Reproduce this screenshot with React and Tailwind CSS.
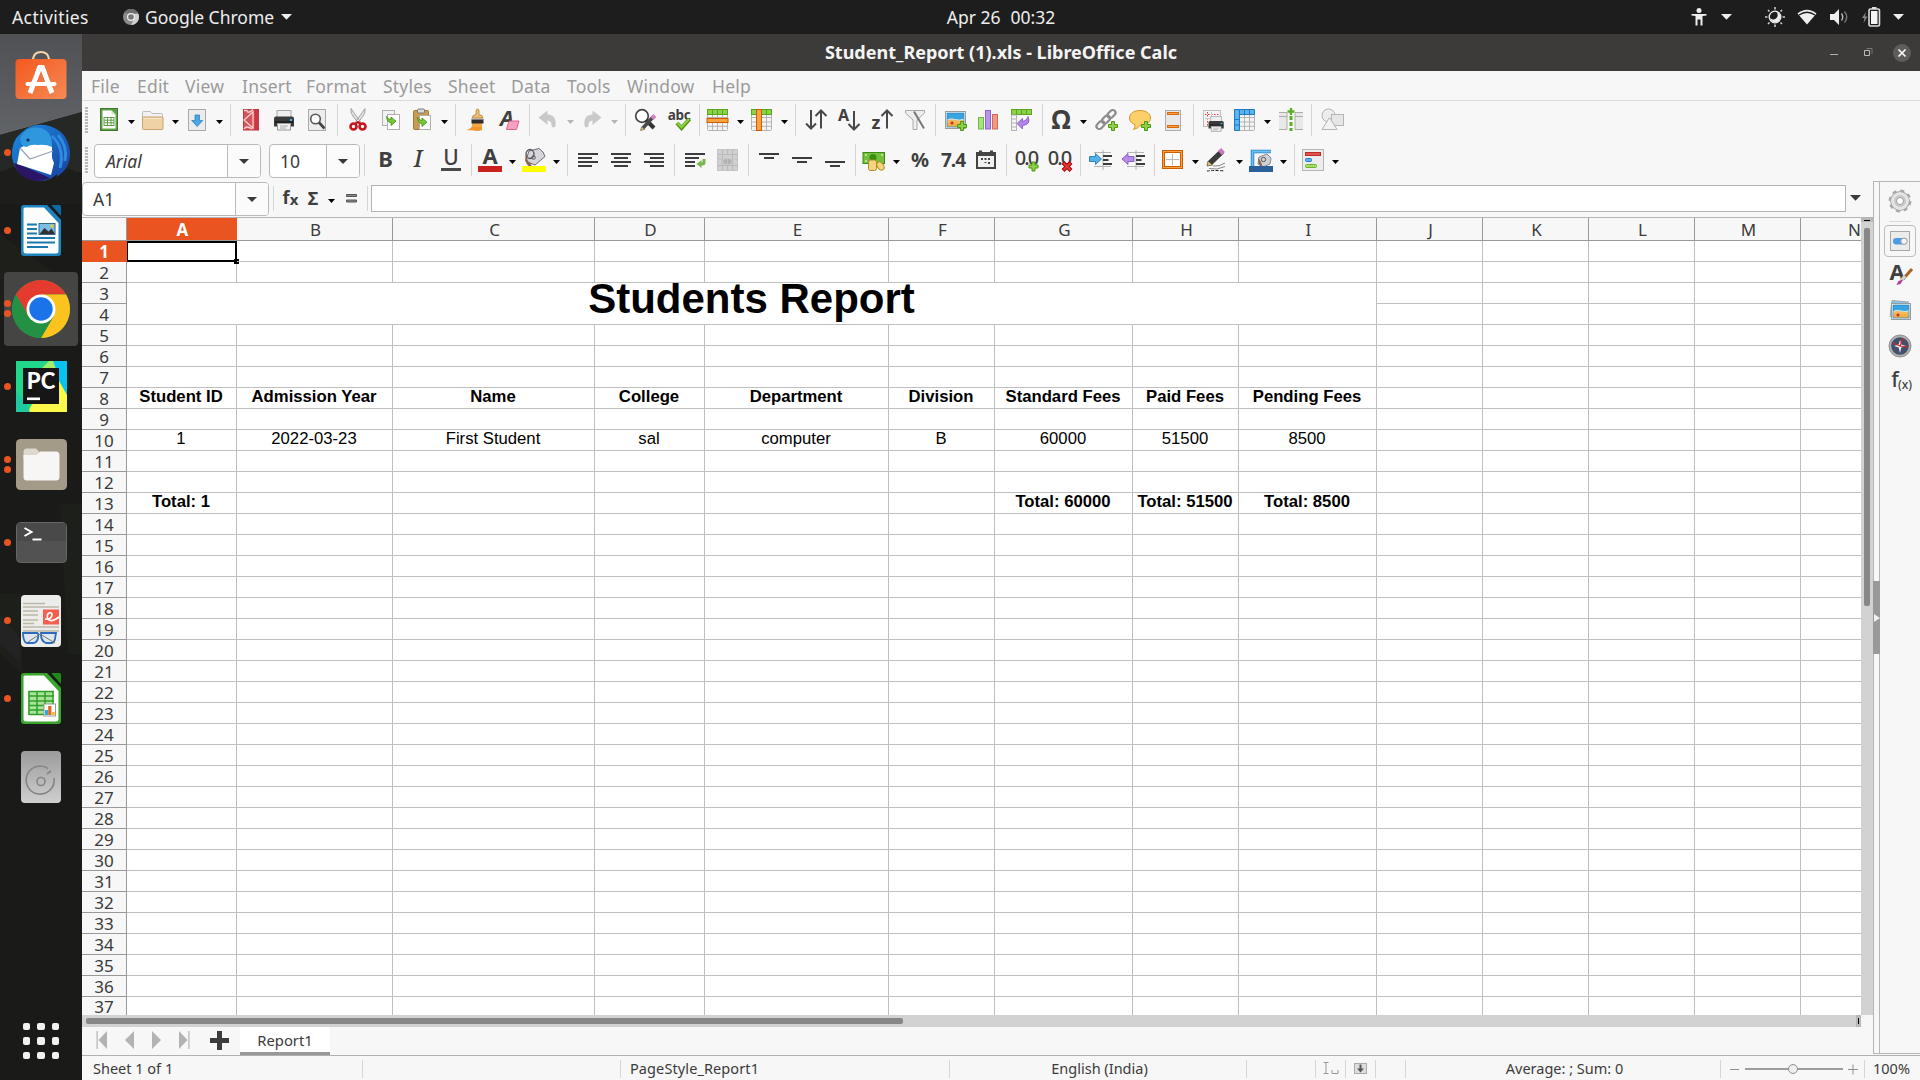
import React from "react";

const UI = "font-['Noto_Sans',sans-serif]";

/* ---------- small helpers ---------- */
const Ico = ({ children, s = 24 }) => (
  <svg width={s} height={s} viewBox="0 0 24 24" className="block shrink-0 overflow-visible">{children}</svg>
);
const Plus = ({ x, y }) => (
  <path transform={`translate(${x} ${y})`} d="M3.5 0.5h3v3h3v3h-3v3h-3v-3h-3v-3h3z" fill="#8ed04b" stroke="#4e9a06" />
);
const GreenArrow = ({ x, y }) => (
  <path transform={`translate(${x} ${y})`} d="M0.5 0.5 Q1 6.5 5 6.5 V9.5 L10 5.2 L5 1 V3.5 Q3 3.6 0.5 0.5z" fill="#73c93a" stroke="#3f8a0f" strokeWidth="0.8" />
);
const Lines = ({ rows }) => (
  <g fill="#3c3c3c">{rows.map(([x, y, w], i) => <rect key={i} x={x} y={y} width={w} height="2" />)}</g>
);
const GridBase = ({ children }) => (
  <>
    <rect x="1.5" y="1.5" width="20" height="21" rx="1" fill="#f4f4f4" stroke="#b4b4b4" />
    <path d="M1.5 9.5h20M1.5 14h20M1.5 18.3h20M6.5 2v20M11.5 2v20M16.5 2v20" stroke="#b4b4b4" />
    {children}
  </>
);
const Beach = ({ x, y, w, h }) => (
  <g transform={`translate(${x} ${y})`}>
    <rect width={w} height={h} fill="#fff" stroke="#9a9a9a" />
    <rect x="1.5" y="1.5" width={w - 3} height={h - 3} fill="#3aa4e0" />
    <path d={`M1.5 ${h * 0.5}q${w * 0.2}-2 ${w * 0.42}-.5t${w * 0.43}-.5V${h - 1.5}H1.5z`} fill="#f1b958" stroke="#c9ecf5" strokeWidth="1" />
    <rect x="1.5" y={h * 0.68} width={w - 3} height={h * 0.32 - 1.5} fill="#eeb04a" />
    <rect x="1.5" y="1.5" width={w - 3} height={h - 3} fill="none" stroke="#2c7fb5" strokeWidth=".7" />
    <path d="M5 11.500h3M6.500 10v3" stroke="#d22" strokeWidth="1.500" />
  </g>
);
const PrinterShape = () => (
  <g>
    <rect x="5" y="2.5" width="14" height="9" fill="#efefef" stroke="#a8a8a8" />
    <path d="M2 10.5q0-2 2-2h16q2 0 2 2v8h-20z" fill="#3a3a3a" />
    <rect x="3" y="13" width="18" height="2" fill="#222" />
    <rect x="18" y="11" width="2" height="2" fill="#2bc4f3" />
    <rect x="5.5" y="15.5" width="13" height="6.5" fill="#f2f2f2" stroke="#9a9a9a" />
    <path d="M8 18h8M8 20h6" stroke="#aaa" />
  </g>
);
const Glyph = ({ x = 12, y = 19, size = 20, children, weight = 700, family = "Noto Sans", italic, fill = "#3f3f3f", ls = 0 }) => (
  <text x={x} y={y} fontSize={size} fontWeight={weight} fontFamily={family} fontStyle={italic ? "italic" : "normal"} textAnchor="middle" fill={fill} letterSpacing={ls}>{children}</text>
);

/* ---------- standard toolbar icons ---------- */
const NewSheet = () => (
  <Ico><rect x="3.5" y="0.5" width="17" height="22" fill="#5f9e4a" stroke="#3e7a2b" />
    <path d="M5.5 2.5h9l4 4v14h-13z" fill="#fff" /><path d="M14.5 2.5v4h4" fill="#cfe5c4" />
    <rect x="7" y="9.5" width="10" height="8" fill="#fff" stroke="#5f9e4a" /><path d="M7 12.2h10M7 14.8h10M10.5 9.5v8M14 9.5v8" stroke="#5f9e4a" /></Ico>
);
const OpenIco = () => (
  <Ico><path d="M1.5 12V4.5q0-1 1-1h7l1.5 2h9.500q1 0 1 1V12" fill="#f2f2f2" stroke="#bdbdbd" />
    <rect x="1.500" y="9" width="20.500" height="12.500" rx="1" fill="#efd2a6" stroke="#c8a26c" /><path d="M2.500 10.500h18.500" stroke="#f9e8cc" /></Ico>
);
const SaveIco = () => (
  <Ico><rect x="3.5" y="1.5" width="17" height="21" fill="#ececec" stroke="#a9a9a9" />
    <path d="M10 7h4.500v5.500h3.200L12.200 18.500 6.700 12.500H10z" fill="#4aa7e2" stroke="#2b84c4" strokeWidth="0.8" /></Ico>
);
const PdfIco = () => (
  <Ico><rect x="4.500" y="1.500" width="15" height="20.500" fill="#d8545b" stroke="#b93a41" />
    <path d="M5 2.500h3q1 4 6-1M5 12l9-8v16zM5 21q2-4 8 0" stroke="#f7cfd0" strokeWidth="1.300" fill="none" /><rect x="15.500" y="2" width="3.500" height="20" fill="#c62b34" opacity=".7" /></Ico>
);
const PreviewIco = () => (
  <Ico><rect x="3.500" y="1.500" width="17" height="21" fill="#ececec" stroke="#a9a9a9" />
    <circle cx="10.500" cy="11" r="4.800" fill="#fff" stroke="#555" strokeWidth="1.600" /><path d="M14 14.500l5.500 6" stroke="#444" strokeWidth="2.600" /></Ico>
);
const CutIco = () => (
  <Ico><path d="M5 0.500q-1 5 3 9l5 6.500 1.500-2zM19 0.500q1 5-3 9l-5 6.500-1.500-2z" fill="#e3e3e3" stroke="#8f8f8f" strokeWidth="0.800" />
    <circle cx="7.500" cy="18.500" r="3" fill="none" stroke="#c8141c" strokeWidth="2.600" /><circle cx="16.500" cy="18.500" r="3" fill="none" stroke="#c8141c" strokeWidth="2.600" /><path d="M9 16l3-2 3 2" stroke="#c8141c" strokeWidth="2" fill="none" /></Ico>
);
const CopyIco = () => (
  <Ico><rect x="3.500" y="2.500" width="12" height="15" fill="#f1f1f1" stroke="#b0b0b0" /><rect x="8.500" y="6.500" width="12" height="15" fill="#fff" stroke="#b0b0b0" /><GreenArrow x={7} y={8} /></Ico>
);
const PasteIco = () => (
  <Ico><rect x="3.500" y="2.500" width="15" height="19" rx="1" fill="#c99a52" stroke="#a57833" /><rect x="7.500" y="1" width="7" height="4" rx="1" fill="#d8d8d8" stroke="#7a7a7a" />
    <rect x="9.500" y="7.500" width="11" height="14" fill="#fff" stroke="#b0b0b0" /><GreenArrow x={7} y={9} /></Ico>
);
const BrushIco = () => (
  <Ico><path d="M2 22q5-1 6-4h10v4q-4 1.500-8 0.500z" fill="#f0962c" /><rect x="8" y="15" width="10" height="4" fill="#f4a845" /><rect x="7.500" y="11" width="12" height="4.500" fill="#2e2e2e" /><rect x="7.500" y="10" width="12" height="1.500" fill="#d2d2d2" />
    <path d="M8 10q0-3 4-3.500V3q0-2 1.500-2t1.500 2v3.500q4 .5 4 3.500z" fill="#e9bd78" stroke="#b98437" strokeWidth="0.800" /></Ico>
);
const ClearIco = () => (
  <Ico><Glyph x={10} y={18} size={22} italic>A</Glyph><path d="M12.500 13h9.500l-2.500 8.500h-10q1-5 3-8.500z" fill="#f7a1c2" stroke="#e0628f" /></Ico>
);
const UndoIco = ({ flip }) => (
  <Ico><path transform={flip ? "translate(24 0) scale(-1 1)" : undefined} d="M2.500 9.500 L11.500 2.500 V6.500 Q21 7 19.500 18 Q17.500 21 15.500 18 Q16 13 11.500 12.500 V17z" fill="#c9c9c9" /></Ico>
);
const FindIco = () => (
  <Ico><circle cx="8" cy="8" r="6.300" fill="#fff" stroke="#454545" strokeWidth="1.700" /><path d="M12 12l8 8" stroke="#333" strokeWidth="4" /><path d="M9 20l10-11" stroke="#4a4a4a" strokeWidth="3.500" /><path d="M18 7.500l3 3" stroke="#d184c8" strokeWidth="4" /><path d="M6.500 22.500l1-3.500 3 2.500z" fill="#e9cb5a" stroke="#555" strokeWidth=".6" /></Ico>
);
const SpellIco = () => (
  <Ico><Glyph y={12} size={13.500} ls={-0.300}>abc</Glyph><path d="M10 15l4.500 5 8-9" fill="none" stroke="#4e9a06" strokeWidth="4" /><path d="M10.500 15l4 4.200 7.500-8.200" fill="none" stroke="#8ed04b" strokeWidth="2" /></Ico>
);
const RowIco = () => (
  <Ico><GridBase><rect x="1.500" y="1.500" width="20" height="5" fill="#8ad348" stroke="#57a61b" /><path d="M6.500 2v4M11.500 2v4M16.500 2v4" stroke="#57a61b" /><rect x="1" y="10.500" width="21" height="4" fill="#f9a23f" stroke="#ce5c00" /></GridBase></Ico>
);
const ColIco = () => (
  <Ico><GridBase><rect x="1.500" y="1.500" width="20" height="5" fill="#8ad348" stroke="#57a61b" /><path d="M6.500 2v4M11.500 2v4M16.500 2v4" stroke="#57a61b" /><rect x="6.500" y="1.500" width="5" height="21" fill="#f9a23f" stroke="#ce5c00" /></GridBase></Ico>
);
const down = (x, y = 2) => `M${x} ${y}V20.500M${x - 5} ${15.500}L${x} 20.500L${x + 5} 15.500`;
const up = (x) => `M${x} 20.500V3M${x - 5.500} 8L${x} 2.500L${x + 5.500} 8`;
const SortIco = () => <Ico><path d={down(7) + up(17)} fill="none" stroke="#484848" strokeWidth="2" /></Ico>;
const SortAIco = () => <Ico><Glyph x={6.500} y={13} size={16}>A</Glyph><path d="M17 3V21M11.500 16L17 21.500L22.500 16" fill="none" stroke="#484848" strokeWidth="2" /></Ico>;
const SortZIco = () => <Ico><Glyph x={6} y={21} size={18}>z</Glyph><path d={up(17)} fill="none" stroke="#484848" strokeWidth="2" /></Ico>;
const FilterIco = () => (
  <Ico><path d="M2.500 2.500h19v2.500l-7.500 7v9.500h-4V12l-7.500-7z" fill="#ededed" stroke="#a8a8a8" /><path d="M11 3.500l10 17" stroke="#777" strokeWidth="2" /></Ico>
);
const ImageIco = () => <Ico><Beach x={1.500} y={3.500} w={20} h={17} /><Plus x={13} y={13} /></Ico>;
const ChartIco = () => (
  <Ico><rect x="1.500" y="9.500" width="5" height="11.500" fill="#a9e37b" stroke="#73b83f" /><rect x="8.500" y="2.500" width="5" height="18.500" fill="#b894ea" stroke="#8e63cc" /><rect x="15.500" y="6.500" width="5" height="14.500" fill="#f09a86" stroke="#d36a54" /></Ico>
);
const PivotIco = () => (
  <Ico><rect x="1.500" y="1.500" width="20" height="5" fill="#8ad348" stroke="#57a61b" /><path d="M6.500 2v4M11.500 2v4M16.500 2v4" stroke="#57a61b" /><rect x="1.500" y="7" width="5" height="15.500" fill="#f4f4f4" stroke="#b4b4b4" /><path d="M2 11h5M2 15h5M2 19h5" stroke="#b4b4b4" />
    <path d="M18 8.500q3.500 8-5.500 9v3.500l-5.500-5.500 5.500-5v3q4.500-.5 5.500-5z" fill="#b286e6" stroke="#8351c4" strokeWidth=".8" /></Ico>
);
const OmegaIco = () => <Ico><Glyph x={12} y={21} size={26}>Ω</Glyph></Ico>;
const LinkIco = () => (
  <Ico><g fill="none" stroke="#8c8c8c" strokeWidth="2.200"><rect x="-4.500" y="-2.800" width="9" height="5.600" rx="2.800" transform="translate(16.500 6) rotate(-45)" /><rect x="-4.500" y="-2.800" width="9" height="5.600" rx="2.800" transform="translate(11 11.500) rotate(-45)" /><rect x="-4.500" y="-2.800" width="9" height="5.600" rx="2.800" transform="translate(5.500 17) rotate(-45)" /></g><Plus x={13} y={13} /></Ico>
);
const CommentIco = () => (
  <Ico><path d="M12 2.500c6 0 10.500 3 10.500 7.500S18 17.500 12 17.500q-2 3-6.500 4 2-2.500 1.500-4.800Q1.500 14.500 1.500 10C1.500 5.500 6 2.500 12 2.500z" fill="#fbd06b" stroke="#d59a1f" /><Plus x={13} y={13} /></Ico>
);
const HeaderIco = () => (
  <Ico><rect x="4.500" y="2.500" width="15" height="20" fill="#e8e8e8" stroke="#ababab" /><rect x="6.500" y="4.500" width="11" height="2" fill="#f9a23f" stroke="#d9670c" /><rect x="6.500" y="17.500" width="11" height="2" fill="#f9a23f" stroke="#d9670c" /></Ico>
);
const PrintAreaIco = () => (
  <Ico><rect x="1.500" y="2.500" width="17" height="16" fill="#f4f4f4" stroke="#bdbdbd" /><path d="M3 6.500h14M5.500 4v14" stroke="#e33" strokeDasharray="1.500 1.500" /><path d="M3 10.500h5M9.500 4v5" stroke="#ccc" /><g transform="translate(5 6.500) scale(.76)"><PrinterShape /></g></Ico>
);
const FreezeIco = () => (
  <Ico><GridBase><path d="M1.500 1.500h20v5h-15v16h-5z" fill="#5bb4ee" stroke="#1f7bc0" /><path d="M6.500 2v5M11.500 2v5M16.500 2v5M2 11.500h5M2 17h5" stroke="#1f7bc0" /></GridBase></Ico>
);
const SplitIco = () => (
  <Ico><g fill="#e8e8e8"><rect x="0" y="4" width="8" height="18" /><rect x="16" y="4" width="8" height="18" /></g><path d="M0 4.500h8v17H0M24 4.500h-8v17h8M0 8.500h8M16 8.500h8" fill="none" stroke="#adadad" /><path d="M12 8v15" stroke="#5bb024" strokeWidth="3" strokeDasharray="4 2" /><path d="M12 0v7M8.500 3.500h7" stroke="#5bb024" strokeWidth="2.400" /></Ico>
);
const ShapesIco = () => (
  <Ico><circle cx="8.500" cy="7.500" r="6.500" fill="#ededed" stroke="#b5b5b5" /><rect x="11.500" y="6.500" width="12" height="11" fill="#e6e6e6" stroke="#b5b5b5" /><path d="M9.500 9.500l7.500 12h-15z" fill="#f3f3f3" stroke="#b5b5b5" /></Ico>
);

/* ---------- formatting toolbar icons ---------- */
const BoldIco = () => <Ico><Glyph x={12.500} y={19} size={22}>B</Glyph></Ico>;
const ItalicIco = () => <Ico><Glyph x={12} y={19} size={23} italic weight={500} family="Noto Serif, Liberation Serif">I</Glyph></Ico>;
const UnderIco = () => <Ico><Glyph x={12} y={17} size={21} weight={500}>U</Glyph><rect x="2" y="20" width="20" height="3" fill="#4a4a4a" /></Ico>;
const FontColorIco = () => <Ico><Glyph x={12} y={16} size={22}>A</Glyph><rect x="0" y="18" width="24" height="6" fill="#c9211e" /></Ico>;
const FillIco = () => (
  <Ico><path d="M7 3l10-2.500q5 3 6 8L13 17 3.500 13z" fill="#d5d5da" stroke="#6d6d75" /><ellipse cx="8" cy="6" rx="4" ry="4.500" fill="none" stroke="#555" strokeWidth="1.300" /><circle cx="11.500" cy="9.500" r="1.800" fill="none" stroke="#555" /><path d="M3.500 7q-1 8 3 11h3q0-3-3-4z" fill="#8a6a52" /><rect x="0" y="18" width="24" height="6" fill="#ffff00" /></Ico>
);
const AL = () => <Ico><Lines rows={[[2, 5, 20], [2, 9, 14], [2, 13, 20], [2, 17, 14]]} /></Ico>;
const AC = () => <Ico><Lines rows={[[2, 5, 20], [5, 9, 14], [2, 13, 20], [5, 17, 14]]} /></Ico>;
const AR = () => <Ico><Lines rows={[[2, 5, 20], [8, 9, 14], [2, 13, 20], [8, 17, 14]]} /></Ico>;
const WrapIco = () => <Ico><Lines rows={[[2, 5, 20], [2, 9, 14], [2, 13, 10], [2, 17, 10]]} /><path d="M19.500 11h3v4q0 2.500-4 2.500v2.500l-5-4 5-4v2.500q1 0 1-1z" fill="#78b84f" /></Ico>;
const MergeIco = () => (
  <Ico><rect x="1.500" y="1.500" width="20" height="21" fill="#d0d0d0" stroke="#c4c4c4" /><path d="M2 6.500h20M2 11h3M19 11h3M2 17.500h20M6.500 2v20M11.500 2v5M16.500 2v20M11.500 18v4" stroke="#bababa" /><path d="M5.500 10.500h12v6h-12z" fill="#c2c2c2" /><path d="M7 13.500l4-3v6zM16 13.500l-4-3v6z" fill="#b0b0b0" /></Ico>
);
const VT = () => <Ico><Lines rows={[[2, 5, 20], [7, 9, 10]]} /></Ico>;
const VM = () => <Ico><Lines rows={[[2, 9, 20], [7, 13, 10]]} /></Ico>;
const VB = () => <Ico><Lines rows={[[2, 13, 20], [7, 17, 10]]} /></Ico>;
const MoneyIco = () => (
  <Ico><rect x="1" y="4.500" width="21.500" height="11" fill="#74bf3c" stroke="#3d8c12" /><circle cx="11" cy="9.500" r="3.500" fill="#3d8c12" /><path d="M3 7h2M19 7h2M3 13h2" stroke="#d2f0b5" strokeWidth="1.500" /><rect x="6.500" y="12" width="8" height="10.500" rx="2" fill="#f0d583" stroke="#b68a1e" /><ellipse cx="18.500" cy="18" rx="3" ry="4.500" transform="rotate(-35 18.500 18)" fill="#f0d583" stroke="#b68a1e" /></Ico>
);
const PctIco = () => <Ico><Glyph x={12} y={19} size={20}>%</Glyph></Ico>;
const NumIco = () => <Ico><Glyph x={12} y={18.500} size={19} ls={-1}>7.4</Glyph></Ico>;
const DateIco = () => (
  <Ico><path d="M2 4h3V2.500h3V4h8V2.500h3V4h3v17H2z" fill="#444" /><rect x="4" y="8" width="16" height="11" fill="#f0f0f0" /><g fill="#444"><rect x="7" y="10" width="2" height="2" /><rect x="10.500" y="10" width="2" height="2" /><rect x="14" y="10" width="2" height="2" /><rect x="14" y="14" width="2" height="2" /><rect x="10.500" y="14" width="2" height="1" /></g></Ico>
);
const DecText = () => <Glyph x={11} y={17} size={20} weight={500} ls={-2}>0.0</Glyph>;
const AddDec = () => <Ico><DecText /><Plus x={13.500} y={13.500} /></Ico>;
const DelDec = () => <Ico><DecText /><path d="M15 14.500l8 8M23 14.500l-8 8" stroke="#a40000" strokeWidth="4" /><path d="M15.500 15l7 7M22.500 15l-7 7" stroke="#e23838" strokeWidth="2.200" /></Ico>;
const IndentLines = () => (
  <g><path d="M5 4.500h17M14 2v20M5 18.500h17" stroke="#b4b4b4" /><path d="M14 8h9M14 12h5.500M14 16h9" stroke="#3c3c3c" strokeWidth="2" /></g>
);
const IncInd = () => <Ico><IndentLines /><path d="M.5 8.500h6v-3l6 5.500-6 5.500v-3h-6z" fill="#53b2ea" stroke="#1b6fa8" strokeWidth=".8" /></Ico>;
const DecInd = () => <Ico><IndentLines /><path d="M12 8.500h-6v-3l-6 5.500 6 5.500v-3h6z" fill="#b78be8" stroke="#7c4bc0" strokeWidth=".8" /></Ico>;
const BorderIco = () => (
  <Ico><rect x="2.500" y="3.500" width="18" height="16" fill="#fff" stroke="#ce5c00" strokeWidth="3" /><rect x="2.500" y="3.500" width="18" height="16" fill="none" stroke="#f9a23f" /><path d="M11.500 6v11M5 11.500h13" stroke="#b8b8b8" /></Ico>
);
const LineStyleIco = () => (
  <Ico><path d="M5 15L17 3.500" stroke="#3b3b3b" strokeWidth="5.500" /><path d="M15 5l3-3" stroke="#cc7ac0" strokeWidth="5.500" /><path d="M2 18l1-5 4.500 4z" fill="#e4c36a" stroke="#333" strokeWidth=".6" /><path d="M8 18q6 1 12-3M4 20.500q8 2 16-2" stroke="#888" fill="none" /><path d="M2 23q8-1 18 0" stroke="#222" strokeDasharray="3 1.500" fill="none" /></Ico>
);
const BorderColorIco = () => (
  <Ico><path d="M3.500 18V3.500H22" stroke="#1f84c6" strokeWidth="3.500" fill="none" /><path d="M3.500 18V3.500H22" stroke="#6cc1f3" strokeWidth="1.800" fill="none" /><path d="M10 9l8-3 4 4-1 6-7 3-5-3z" fill="#d0d0d6" stroke="#6d6d75" strokeWidth=".8" /><circle cx="14.500" cy="11.500" r="2.200" fill="none" stroke="#555" /><path d="M9.500 10q-1 5 2 8h2q-1-4-4-8z" fill="#8a6a52" /><rect x="0" y="18" width="24" height="6" fill="#2a6099" /></Ico>
);
const CondIco = () => (
  <Ico><rect x="1.500" y="1.500" width="21" height="21" fill="#ececec" stroke="#b5b5b5" /><rect x="4.500" y="4.500" width="15" height="3" fill="#e05252" stroke="#c02c2c" /><rect x="4.500" y="10.500" width="6" height="3" rx="1" fill="#5bb4ee" stroke="#1f7bc0" /><rect x="4.500" y="16.500" width="11" height="3" rx="1" fill="#a3e069" stroke="#6cb02e" /></Ico>
);

/* ---------- toolbar layout ---------- */
const Caret = ({ c = "#000" }) => <svg width="7" height="4" viewBox="0 0 7 4" className="block"><path d="M0 0h7L3.500 4z" fill={c} /></svg>;
const Item = ({ I, flip }) => <div className="flex h-8 w-[33px] items-center justify-center"><I flip={flip} /></div>;
const Drop = ({ I, dim, flip }) => (
  <div className="flex h-8 w-11 items-center pl-[2.500px]"><I flip={flip} /><div className="ml-[7px] mt-1"><Caret c={dim ? "#b5b5b5" : "#000"} /></div></div>
);
const Sep = () => <div className="flex h-8 w-2 justify-center"><div className="h-8 w-px bg-[#d4d4d4]" /></div>;
const Grip = () => (
  <div className="flex w-[3px] flex-col gap-px">{Array.from({ length: 9 }, (_, i) => <div key={i} className="h-0.5 bg-[#b8b8b8]" />)}</div>
);
const Printer = () => <Ico><PrinterShape /></Ico>;
const tools = (list) => list.map((t, i) => {
  if (t === "|") return <Sep key={i} />;
  const [I, kind, dim, flip] = Array.isArray(t) ? t : [t];
  return kind ? <Drop key={i} I={I} dim={dim} flip={flip} /> : <Item key={i} I={I} />;
});
const STANDARD = [[NewSheet, 1], [OpenIco, 1], [SaveIco, 1], "|", PdfIco, Printer, PreviewIco, "|", CutIco, CopyIco, [PasteIco, 1], "|", BrushIco, ClearIco, "|", [UndoIco, 1, 1], [UndoIco, 1, 1, true], "|", FindIco, SpellIco, "|", [RowIco, 1], [ColIco, 1], "|", SortIco, SortAIco, SortZIco, FilterIco, "|", ImageIco, ChartIco, PivotIco, "|", [OmegaIco, 1], LinkIco, CommentIco, HeaderIco, "|", PrintAreaIco, [FreezeIco, 1], SplitIco, "|", ShapesIco];
const FORMAT = ["|", BoldIco, ItalicIco, UnderIco, "|", [FontColorIco, 1], [FillIco, 1], "|", AL, AC, AR, "|", WrapIco, MergeIco, "|", VT, VM, VB, "|", [MoneyIco, 1], PctIco, NumIco, DateIco, "|", AddDec, DelDec, "|", IncInd, DecInd, "|", [BorderIco, 1], [LineStyleIco, 1], [BorderColorIco, 1], "|", [CondIco, 1]];

const BigCaret = ({ c = "#3a3a3a" }) => <svg width="11" height="6" viewBox="0 0 11 6" className="block"><path d="M0 0h11L5.500 5.800z" fill={c} /></svg>;
const SmallCaret = () => <svg width="10" height="5" viewBox="0 0 10 5" className="block"><path d="M0 0h10L5 5z" fill="#3a3a3a" /></svg>;
const Combo = ({ text, cls, btn, italic }) => (
  <div className={`flex h-[34px] overflow-hidden rounded-[4px] border border-[#b9b9b9] bg-white text-[17.500px] text-[#3a3a3a] ${cls}`}>
    <div className={`flex flex-1 items-center pt-px ${italic ? "pl-[11px] italic" : "pl-[10px]"}`}>{text}</div>
    <div className={`flex items-center justify-center border-l border-[#b9b9b9] bg-[#fbfbfb] ${btn}`}><SmallCaret /></div>
  </div>
);

/* ---------- top bar ---------- */
const TopBar = () => (
  <div className="grid h-[34px] grid-cols-[1fr_110px_864px] items-center bg-[#1d1d1d] text-[17.500px] text-[#eeeeee]">
    <div className="flex items-center">
      <span className="w-[111px] whitespace-nowrap pl-3 tracking-[0.400px]">Activities</span>
      <svg width="16" height="16" viewBox="0 0 16 16" className="ml-3"><circle cx="8" cy="8" r="8" fill="#8b8b8b" /><path d="M8 4.500h7.200A8 8 0 0 1 8 16l3-6z" fill="#d0d0d0" /><path d="M1 4A8 8 0 0 1 15 4.500H8z" fill="#6e6e6e" /><circle cx="8" cy="8" r="4" fill="#efefef" /><circle cx="8" cy="8" r="2.800" fill="#777" /></svg>
      <span className="ml-[6px]">Google Chrome</span>
      <div className="ml-[7px]"><BigCaret c="#eee" /></div>
    </div>
    <div className="flex justify-center gap-2.5 whitespace-nowrap"><span>Apr 26</span><span>00:32</span></div>
    <div className="flex items-center justify-end pr-4">
      <svg width="16" height="20" viewBox="0 0 16 20" fill="#eee"><circle cx="8" cy="3.500" r="2.500" /><path d="M.5 7h15v1.500l-4 .5v9.500h-2v-6h-3v6h-2V9l-4-.5z" /></svg>
      <div className="ml-[14px]"><BigCaret c="#eee" /></div>
      <svg width="20" height="20" viewBox="0 0 20 20" className="ml-[33px]"><circle cx="10" cy="10" r="5.800" fill="none" stroke="#eee" strokeWidth="1.300" /><path d="M9 5a5.200 5.200 0 1 0 6 6.500A4.200 4.200 0 0 1 9 5z" transform="rotate(-90 10 10)" fill="#eee" /><g stroke="#ccc" strokeWidth="1.600"><path d="M10 0v2.500M10 17.500V20M0 10h2.500M17.500 10H20M3 3l1.500 1.500M15.500 15.500L17 17M3 17l1.500-1.500M15.500 4.500L17 3" /></g></svg>
      <svg width="20" height="16" viewBox="0 0 20 16" className="ml-[12px]"><path d="M.5 4.500Q10-3 19.500 4.500L10 15.500z" fill="#eee" /><path d="M2 5Q10-.5 18 5" fill="none" stroke="#1d1d1d" strokeWidth="1.300" transform="translate(0 1)" /></svg>
      <svg width="19" height="18" viewBox="0 0 19 18" className="ml-[13px]"><path d="M0 6h4l5-5v16l-5-5H0z" fill="#eee" /><path d="M11.500 5.500q2.500 3.500 0 7" stroke="#bbb" strokeWidth="1.400" fill="none" /><path d="M14.500 3.500q4.500 5.500 0 11" stroke="#777" strokeWidth="1.400" fill="none" /></svg>
      <svg width="19" height="20" viewBox="0 0 19 20" className="ml-[13px]"><path d="M4 5L0 11h2.500L1.500 16l4-6.500H3z" fill="#8a8a8a" /><rect x="7" y="2" width="10.500" height="17" rx="1.500" fill="none" stroke="#ddd" strokeWidth="1.600" /><rect x="10" y="0" width="4.500" height="2" fill="#ddd" /><rect x="9" y="4" width="6.500" height="13" fill="#f4f4f4" /></svg>
      <div className="ml-3"><BigCaret c="#eee" /></div>
    </div>
  </div>
);

/* ---------- dock ---------- */
const LoPage = ({ c, c2, children }) => (
  <svg width="40" height="51" viewBox="0 0 40 51"><rect x="30" y="0" width="10" height="11" fill={c2} rx="1.500" /><path d="M3 0h21L40 17v31q0 3-3 3H3q-3 0-3-3V3q0-3 3-3z" fill={c} /><path d="M23 0h7l10 11v6z" fill="#1a1a1a" /><path d="M24 0L40 17" stroke={c} strokeWidth="3" /><path d="M4 2.500h19L37.500 18v28q0 2.500-2.500 2.500H5q-2.500 0-2.500-2.500V4q0-1.500 1.500-1.500z" fill="#fdfdfd" />{children}</svg>
);
const Bag = () => (
  <svg width="52" height="50" viewBox="0 0 52 50"><defs><linearGradient id="bag" x1="0" y1="0" x2="1" y2="1"><stop offset="0" stopColor="#f4581f" /><stop offset="1" stopColor="#f58a55" /></linearGradient></defs>
    <path d="M18 11V9q1-7 8-7t8 7v2" fill="none" stroke="#f0d3a6" strokeWidth="2.200" /><rect x=".5" y="9" width="51" height="40" rx="4" fill="url(#bag)" /><path d="M25 17L15 43M27 17L37 43" stroke="#fff" strokeWidth="5" /><path d="M23 15h6l3 8H20z" fill="#fff" /><path d="M26 21l4 11h-8z" fill="#f4733f" /><rect x="10.500" y="32" width="31" height="4" rx="2" fill="#fff" /></svg>
);
const Bird = () => (
  <svg width="60" height="60" viewBox="0 0 60 60"><defs><linearGradient id="tb" x1="0" y1="0" x2="1" y2="1"><stop offset="0" stopColor="#1b8be0" /><stop offset="1" stopColor="#1a3f9e" /></linearGradient></defs>
    <path d="M10 10Q20 0 34 2q22 4 25 26 1 18-14 26 2-2 1-3-8 8-20 7Q4 54 1 34 0 18 10 10z" fill="url(#tb)" /><path d="M3 40q4 15 22 18 8 0 14-3L10 42z" fill="#2b1566" /><path d="M9 25l10-5 22 1v14l2 5-3 12L6 41z" fill="#fff" /><path d="M9 25l10 11 23-8" fill="none" stroke="#9aa3b5" strokeWidth="1.200" /><path d="M9 16Q14 2 30 5q12 4 11 19-6-3-14-2-8-1-11 2-6 0-7-8z" fill="#2f97dd" /><path d="M41 13q13 12 8 32M47 12q10 12 7 26" stroke="#2f8ae0" strokeWidth="3" fill="none" /><circle cx="17" cy="17" r="1.600" fill="#0c2c66" /></svg>
);
const Chrome = () => (
  <svg width="58" height="58" viewBox="-29 -29 58 58"><circle r="29" fill="#31a24c" /><path d="M-25.100 -14.500A29 29 0 0 1 25.100 -14.500H0L-12.500 7.200z" fill="#e33b2e" /><path d="M0 29L12.600 7.200 0 0v-14.500h25.100A29 29 0 0 1 0 29z" fill="#fcc31e" /><path d="M-25.100-14.500A29 29 0 0 0 0 29L12.600 7.200L-12.600 7.200z" fill="#249043" /><circle r="14.500" fill="#fff" /><circle r="11.700" fill="#1a73e8" /></svg>
);
const PyCharm = () => (
  <svg width="51" height="51" viewBox="0 0 51 51"><rect width="51" height="51" fill="#21d789" /><path d="M38 0h13v34L36 6z" fill="#07c3f2" /><path d="M43 20l8 14v17H12l4-8z" fill="#fcf84a" /><path d="M26 7l7-7h4l3 8z" fill="#a4ec6a" /><path d="M0 51V30l9 10 5 11z" fill="#21c9a0" /><rect x="7" y="7" width="36" height="36" fill="#161616" /><text x="25" y="28" fontFamily="Lato" fontWeight="900" fontSize="22" fill="#fff" textAnchor="middle">PC</text><rect x="11" y="36.500" width="13" height="2.600" fill="#fff" /></svg>
);
const Files = () => (
  <svg width="51" height="51" viewBox="0 0 51 51"><rect width="51" height="51" rx="4.500" fill="#a39a88" /><path d="M7.500 20V13q0-3.500 3.500-3.500h9l4 4v6z" fill="#dcd8d0" /><path d="M7.500 16h13l4-3.500h15.500q3.500 0 3.500 3.500v22q0 3.500-3.500 3.500h-29q-3.500 0-3.500-3.500z" fill="#f7f6f5" /></svg>
);
const Terminal = () => (
  <svg width="51" height="41" viewBox="0 0 51 41"><rect x=".5" y=".5" width="50" height="40" rx="4" fill="#525252" stroke="#666" /><path d="M1 1h49v18H1z" fill="#494949" /><path d="M8.500 6l7 4-7 4" fill="none" stroke="#fff" strokeWidth="2" /><rect x="16.500" y="16.500" width="9" height="2" fill="#fff" /></svg>
);
const Viewer = () => (
  <svg width="40" height="52" viewBox="0 0 40 52"><rect width="40" height="52" rx="4" fill="#ececea" /><path d="M2 8.500h22M2 12h36M2 16h15M2 20h15M2 25h15M2 28.500h11M2 32h36M2 36h36" stroke="#bcb8a8" strokeWidth="1.700" /><rect x="22" y="14.500" width="16" height="15" fill="#f4604f" /><path d="M24 24q6 1 7-4 0-3-3-2-3 2-1 6 3 4 11-2" fill="none" stroke="#fff" strokeWidth="1.600" /><path d="M2 38h14q2 0 1 5-1 5-5 5H6q-3 0-4-8zM20 38h15l-1 6q-1 4-4 4h-5q-5-2-5-8z" fill="#dfe6ee" stroke="#2c6bb8" strokeWidth="1.800" /><path d="M7 47l12-8 15 9" fill="none" stroke="#777" /></svg>
);
const Disk = () => (
  <svg width="40" height="52" viewBox="0 0 40 52"><defs><linearGradient id="dk" x1="0" y1="0" x2="0" y2="1"><stop offset="0" stopColor="#9b9b9b" /><stop offset="1" stopColor="#cfcfcf" /></linearGradient></defs><rect width="40" height="52" rx="4" fill="url(#dk)" /><path d="M33 27a14 14 0 1 1-6-9.500M26 23l4-3" fill="none" stroke="#858585" strokeWidth="1.600" /><circle cx="20" cy="30.500" r="4" fill="none" stroke="#858585" strokeWidth="1.600" /></svg>
);
const WriterIco = () => (
  <LoPage c="#1d84bd" c2="#0e6aa3"><path d="M6 19.500h10M6 24h10M6 28.500h10M6 33h28M6 37.500h28M6 42h21" stroke="#1d78ad" strokeWidth="2" /><rect x="18" y="18.500" width="16" height="11" fill="#7bbfe4" stroke="#33688a" /><path d="M18.500 29l5-6 4 3.500 3-3 3.500 5.500z" fill="#333" /><circle cx="31" cy="21" r="1.800" fill="#e8c63c" /></LoPage>
);
const CalcIco = () => (
  <LoPage c="#38a62a" c2="#1f8a1a"><rect x="7" y="18" width="25" height="23.500" fill="#a9e39a" /><path d="M8 18.500h25M8 23h25M8 28h25M8 32.500h25M8 37h25M8 41.500h25M8 18v24M16 18v24M24 18v24M32 18v24" stroke="#2f9e28" strokeWidth="1.500" /><rect x="23" y="31" width="11.500" height="12" fill="#fff" stroke="#9a9a9a" /><rect x="24" y="37" width="3" height="5" fill="#3a9fe0" /><rect x="27.200" y="33" width="3.200" height="9" fill="#e0641c" /><rect x="30.700" y="39" width="3" height="3" fill="#f0c020" /></LoPage>
);
const DOCK = [[Bag, 0], [Bird, 1], [WriterIco, 1], [Chrome, 2, true], [PyCharm, 1], [Files, 2], [Terminal, 1], [Viewer, 1], [CalcIco, 1], [Disk, 0]];
const Dock = () => (
  <div className="relative flex w-[82px] shrink-0 flex-col overflow-hidden bg-[#1a1a19] pt-[1.500px]">
    <svg width="82" height="1046" viewBox="0 0 82 1046" className="absolute left-0 top-0">
      <defs><linearGradient id="sky" x1="0" y1="0" x2="0" y2="1"><stop offset="0" stopColor="#505155" /><stop offset="1" stopColor="#606367" /></linearGradient></defs>
      <rect width="82" height="1046" fill="#1a1a19" /><path d="M0 0h82v78Q40 90 0 101z" fill="url(#sky)" /><path d="M0 101Q40 90 82 78v60H0z" fill="#252824" /><path d="M0 138Q40 120 82 140v30H0z" fill="#1d1d1c" />
      <path d="M0 200l82 60v50L0 280z" fill="#1e1f1b" /><path d="M0 560h22v80l-22-20zM60 470h22v150H68z" fill="#1d1f1a" /><path d="M0 580l20 24v24L0 610z" fill="#222322" />
    </svg>
    {DOCK.map(([I, dots, active], i) => (
      <div key={i} className="relative flex h-[78px] items-center">
        <div className={`ml-1 flex h-[74px] w-[74px] shrink-0 items-center justify-center rounded-[4px] ${active ? "bg-[#454544]" : ""}`}><I /></div>
        <div className="absolute left-1 top-0 flex h-full flex-col justify-center gap-[3px]">{Array.from({ length: dots }, (_, k) => <div key={k} className="h-[7px] w-[7px] rounded-full bg-[#e95420]" />)}</div>
      </div>
    ))}
    <div className="relative mb-[21px] ml-[23px] mt-auto grid w-[36px] grid-cols-3 gap-[7px]">{Array.from({ length: 9 }, (_, i) => <div key={i} className="h-[7.300px] w-[7.300px] rounded-[2px] bg-[#f2f2f2]" />)}</div>
  </div>
);

/* ---------- sheet ---------- */
const COLS = "ABCDEFGHIJKLMN".split("");
const GRID = "grid grid-cols-[45px_110px_156px_202px_110px_184px_106px_138px_106px_138px_106px_106px_106px_106px_60px]";
const DATA = {
  8: ["Student ID", "Admission Year", "Name", "College", "Department", "Division", "Standard Fees", "Paid Fees", "Pending Fees"],
  10: ["1", "2022-03-23", "First Student", "sal", "computer", "B", "60000", "51500", "8500"],
  13: ["Total: 1", "", "", "", "", "", "Total: 60000", "Total: 51500", "Total: 8500"],
};
const RowHead = ({ n }) => (
  <div className={`flex items-center justify-center border-r text-[17px] leading-none ${n === 1 ? "border-[#e95420] bg-[#e95420] font-bold text-white" : "border-[#999] bg-[#f7f7f7] text-[#3b3b3b]"} ${n === 37 ? "pt-px" : "border-b"}`}>{n}</div>
);
const Cell = ({ n, c }) => {
  const t = DATA[n] && DATA[n][c];
  return (
    <div className={`relative flex items-center justify-center whitespace-nowrap border-[#bfbfbf] text-[16.700px] leading-none text-black ${c === 13 ? "" : "border-r"} ${n === 37 ? "" : "border-b"} ${n === 10 ? "" : "font-bold"}`}>
      {t && <span className="-ml-px -mt-px font-['Liberation_Sans',Arial,sans-serif]">{t}</span>}
      {n === 1 && c === 0 && (
        <div className="absolute left-0 top-0 h-[21px] w-[110px] border-2 border-l border-black"><div className="absolute -bottom-1 -right-1 h-[5px] w-[5px] bg-black" /></div>
      )}
    </div>
  );
};
const Sheet = () => {
  const rows = [];
  for (let n = 1; n <= 37; n++) {
    if (n === 4) continue;
    if (n === 3) {
      rows.push(
        <div key={n} className={`${GRID} grid-rows-[21px_21px]`}>
          <RowHead n={3} />
          <div className="col-span-9 row-span-2 flex items-center justify-center border-b border-r border-[#bfbfbf] font-['Liberation_Sans',Arial,sans-serif] text-[42px] font-bold leading-none text-black"><span className="-mt-2.5">Students Report</span></div>
          {COLS.slice(9).map((l, i) => <Cell key={l} n={3} c={i + 9} />)}
          <RowHead n={4} />
          {COLS.slice(9).map((l, i) => <Cell key={l} n={4} c={i + 9} />)}
        </div>
      );
      continue;
    }
    rows.push(
      <div key={n} className={`${GRID} ${n === 1 ? "relative z-10" : ""} ${n === 37 ? "h-[18px]" : "h-[21px]"}`}>
        <RowHead n={n} />
        {COLS.map((l, i) => <Cell key={l} n={n} c={i} />)}
      </div>
    );
  }
  return (
    <div className="w-[1779px] overflow-hidden bg-white">
      <div className={`${GRID} h-[23px] text-[17px] leading-none text-[#3b3b3b]`}>
        <div className="border-b border-r border-[#999] bg-[#f7f7f7]" />
        {COLS.map((l, i) => (
          <div key={l} className={`flex items-center overflow-hidden border-b border-[#999] ${i === 0 ? "justify-center border-r border-r-[#e95420] bg-[#e95420] pl-[2px] font-bold text-white" : i === 13 ? "bg-[#f7f7f7] pl-[47px]" : "justify-center border-r bg-[#f7f7f7] pl-[2px]"}`}>{l}</div>
        ))}
      </div>
      {rows}
    </div>
  );
};

/* ---------- sidebar ---------- */
const Gear = () => (
  <Ico><circle cx="12" cy="12" r="9.300" fill="#e4e4e4" stroke="#a8a8a8" strokeWidth="1.200" /><circle cx="12" cy="12" r="10.200" fill="none" stroke="#a8a8a8" strokeWidth="2.400" strokeDasharray="4 4.010" /><circle cx="12" cy="12" r="8.800" fill="#e4e4e4" /><circle cx="12" cy="12" r="6" fill="#c9c9c9" /><circle cx="12" cy="12" r="3.500" fill="#fff" stroke="#9f9f9f" /></Ico>
);
const Props = () => (
  <Ico><rect x="2.500" y="2.500" width="19" height="19" fill="#ececec" stroke="#a8a8a8" /><rect x="5" y="9" width="14" height="6.500" rx="3.200" fill="#4a9be8" /><circle cx="16" cy="12.200" r="3.200" fill="#f4f4f4" stroke="#9a9a9a" /></Ico>
);
const Styles = () => (
  <Ico><Glyph x={9} y={18} size={22}>A</Glyph><path d="M24 7l-8 9" stroke="#a86422" strokeWidth="3" /><path d="M17 14l-4 5" stroke="#cfcfcf" strokeWidth="3.500" /><path d="M15 17.500l-2.500 4.500-4 1 2-4z" fill="#b03aa0" /></Ico>
);
const Gallery = () => <Ico><path d="M2 18L4 1.500l17 1.500" fill="#7fc6ea" stroke="#a8a8a8" /><Beach x={3.500} y={4.500} w={19} h={16} /></Ico>;
const Nav = () => (
  <Ico><circle cx="12" cy="12" r="10" fill="#43506a" stroke="#b0b0b0" strokeWidth="2.400" /><circle cx="12" cy="12" r="11" fill="none" stroke="#8a8a8a" strokeWidth=".8" /><path d="M12 6l1.300 4.500 4.700 1.500-4.700 1.500L12 19l-1.300-5.500L6 12l4.700-1.500z" fill="#f0f0f0" /><path d="M5 9l7 3 3-7.500M12 12l8 1" stroke="#d6252b" strokeWidth="1.200" fill="none" /></Ico>
);
const Fx = () => <Ico><Glyph x={7} y={17} size={21} weight={500}>f</Glyph><Glyph x={17} y={19} size={12} weight={500}>(x)</Glyph></Ico>;

const MENU = [["File", "w-[46px]"], ["Edit", "w-[48px]"], ["View", "w-[57px]"], ["Insert", "w-[64px]"], ["Format", "w-[77px]"], ["Styles", "w-[65px]"], ["Sheet", "w-[63px]"], ["Data", "w-[56px]"], ["Tools", "w-[60px]"], ["Window", "w-[85px]"], ["Help", "w-[50px]"]];
const VSep = () => <div className="h-[18px] w-px shrink-0 bg-[#d6d6d6]" />;

export default function App() {
  return (
    <div className={`flex h-[1080px] w-[1920px] flex-col overflow-hidden bg-[#f7f7f7] ${UI}`}>
      <TopBar />
      <div className="flex flex-1">
        <Dock />
        <div className="flex w-[1838px] flex-col">
          {/* title bar */}
          <div className="grid h-[37px] grid-cols-[1fr_auto_1fr] items-center bg-[#3d3b39]">
            <div />
            <div className="text-[18px] font-bold text-[#f4f4f4]">Student_Report (1).xls - LibreOffice Calc</div>
            <div className="flex items-center justify-end pr-[9px]">
              <div className="mt-1 h-px w-2 bg-[#b0b0b0]" />
              <svg width="9" height="9" viewBox="0 0 9 9" className="mr-5 ml-[26px]"><path d="M.5 2.500h5v5h-5z" fill="none" stroke="#bbb" /><path d="M2.500.5h5.500v5.500" fill="none" stroke="#777" /></svg>
              <svg width="18" height="18" viewBox="0 0 18 18"><circle cx="9" cy="9" r="9" fill="#5f5d5b" /><path d="M5.500 5.500l7 7M12.500 5.500l-7 7" stroke="#fff" strokeWidth="1.600" /></svg>
            </div>
          </div>
          {/* menu bar */}
          <div className="flex h-[30px] items-center border-b border-[#dadada] pl-[9px] pt-px text-[17.500px] tracking-[0.200px] text-[#9b9b9b]">
            {MENU.map(([m, w]) => <div key={m} className={w}>{m}</div>)}
          </div>
          {/* toolbars */}
          <div className="flex h-[38px] items-center pl-[3px]"><Grip /><div className="ml-[6.500px] flex">{tools(STANDARD)}</div></div>
          <div className="flex h-[42px] items-center pl-[3px]">
            <Grip />
            <Combo text="Arial" italic cls="ml-[6px] mt-0.5 w-[167px]" btn="w-[33px]" />
            <Combo text="10" cls="ml-2 mt-0.5 w-[91px]" btn="w-[33px]" />
            <div className="ml-[0.500px] flex">{tools(FORMAT)}</div>
          </div>
          <div className="flex h-[874px]">
            <div className="flex w-[1791px] flex-col">
              {/* formula bar */}
              <div className="flex h-[36px] items-start pt-px">
                <Combo text="A1" cls="w-[187px]" btn="w-[33px]" />
                <div className="mt-1 flex h-[25px] items-center text-[#454545]">
                  <div className="ml-1 h-[25px] w-px bg-[#d6d6d6]" />
                  <svg width="17" height="24" viewBox="0 0 17 24" className="ml-2 overflow-visible"><Glyph x={4} y={17} size={18}>f</Glyph><Glyph x={12} y={17.500} size={15}>x</Glyph></svg>
                  <svg width="13" height="24" viewBox="0 0 13 24" className="ml-2 overflow-visible"><Glyph x={6} y={17.500} size={18}>Σ</Glyph></svg>
                  <div className="ml-[8px] mt-1"><Caret /></div>
                  <svg width="11" height="9" viewBox="0 0 11 9" className="ml-[11px]"><path d="M.5.5h10v2H.5zM.5 6h10v2H.5z" fill="#8a8a8a" stroke="#555" /></svg>
                  <div className="ml-[10px] h-[25px] w-px bg-[#d6d6d6]" />
                </div>
                <div className="ml-[3px] mt-[3px] h-[27px] w-[1475px] border border-[#b3b3b3] bg-white" />
                <div className="ml-[4px] mt-[13px]"><BigCaret /></div>
              </div>
              {/* grid with vertical scroll bar */}
              <div className="flex h-[798px] border-t border-[#b5b5b5]">
                <Sheet />
                <div className="flex w-3 flex-col items-center bg-[#d2d2d2]">
                  <div className="flex h-1 w-full items-center justify-center bg-[#b8b8b8]"><div className="h-px w-1.5 bg-black" /></div>
                  <div className="mt-1.5 h-[378px] w-1.5 rounded-[2px] bg-[#878787]" />
                </div>
              </div>
              <div className="flex h-3 w-[1779px] items-center justify-between bg-[#d2d2d2] pl-1">
                <div className="h-1.5 w-[817px] rounded-[2px] bg-[#878787]" />
                <div className="flex h-3 w-[5px] items-center justify-center bg-[#b8b8b8]"><div className="h-1.5 w-px bg-black" /></div>
              </div>
              {/* sheet tabs */}
              <div className="flex h-[28px] items-start">
                <svg width="96" height="20" viewBox="0 0 96 20" className="ml-[14px] mt-[3px]" fill="#b3b3b3"><path d="M.5 1h1.200v18H.5zM11 1v18L2.500 10zM38 1v18L29 10zM56 1v18l9-9zM83 1v18l8.500-9zM92.300 1h1.200v18h-1.200z" /></svg>
                <svg width="19" height="19" viewBox="0 0 19 19" className="ml-[18px] mt-1"><path d="M7 0h5v7h7v5h-7v7H7v-7H0V7h7z" fill="#3d3d3d" /></svg>
                <div className="ml-[11px] flex h-[28px] w-[90px] items-center justify-center border-b-[3px] border-[#999] bg-white pt-0.5 text-[14.800px] text-[#3b3b3b]">Report1</div>
              </div>
            </div>
            {/* sidebar */}
            <div className="flex h-[873px] w-[47px] border-b border-l border-t border-[#b5b5b5]">
              <div className="flex w-1.5 border-r border-[#b5b5b5] pt-[399px]">
                <div className="-ml-px flex h-[73px] w-[7px] shrink-0 items-center bg-[#999]"><svg width="6" height="8" viewBox="0 0 6 8" className="ml-px"><path d="M0 0l6 4-6 4z" fill="#f2f2f2" /></svg></div>
              </div>
              <div className="flex flex-1 flex-col items-center pt-[7px]">
                <Gear />
                <div className="mt-2 h-px w-[22px] bg-[#dadada]" />
                <div className="mt-[3px] flex h-8 w-8 items-center justify-center rounded-[4px] border border-[#bdbdbd]"><Props /></div>
                <div className="mt-[5px]"><Styles /></div>
                <div className="mt-[13px]"><Gallery /></div>
                <div className="mt-[11px]"><Nav /></div>
                <div className="mt-[12px]"><Fx /></div>
              </div>
            </div>
          </div>
          {/* status bar */}
          <div className="flex h-[25px] items-center border-t border-[#b0b0b0] pt-px text-[14.500px] text-[#3b3b3b]">
            <div className="w-[280px] pl-[11px]">Sheet 1 of 1</div><VSep />
            <div className="w-[257px]" /><VSep />
            <div className="w-[328px] pl-[9px] tracking-[0.100px]">PageStyle_Report1</div><VSep />
            <div className="w-[296px] pl-[3px] text-center">English (India)</div><VSep />
            <div className="w-[68px]" /><VSep />
            <div className="flex w-[29px] justify-center"><svg width="16" height="13" viewBox="0 0 16 13" fill="none" stroke="#999"><path d="M.5.5h5M3 .5v11M.5 11.500h5M9 8v3.500h6V8" /></svg></div><VSep />
            <div className="flex w-[29px] justify-center"><svg width="13" height="11" viewBox="0 0 13 11"><rect x=".5" y=".5" width="12" height="10" fill="#ddd" stroke="#aaa" /><path d="M5.500 1.500h2v4H10L6.500 9.500 3 5.500h2.500z" fill="#555" /></svg></div><VSep />
            <div className="w-[29px]" /><VSep />
            <div className="w-[314px] pl-[3px] text-center">Average: ; Sum: 0</div><VSep />
            <div className="flex w-[143px] items-center justify-center pl-[3px]"><svg width="128" height="12" viewBox="0 0 128 12"><path d="M0 6.500h9M118 6.500h10M123 1.500v10" stroke="#8f8f8f" /><path d="M15 6h98" stroke="#9d9d9d" strokeWidth="2" /><circle cx="63" cy="6" r="4.500" fill="#eee" stroke="#8f8f8f" /></svg></div><VSep />
            <div className="flex-1 pl-[8px]">100%</div>
          </div>
        </div>
      </div>
    </div>
  );
}
